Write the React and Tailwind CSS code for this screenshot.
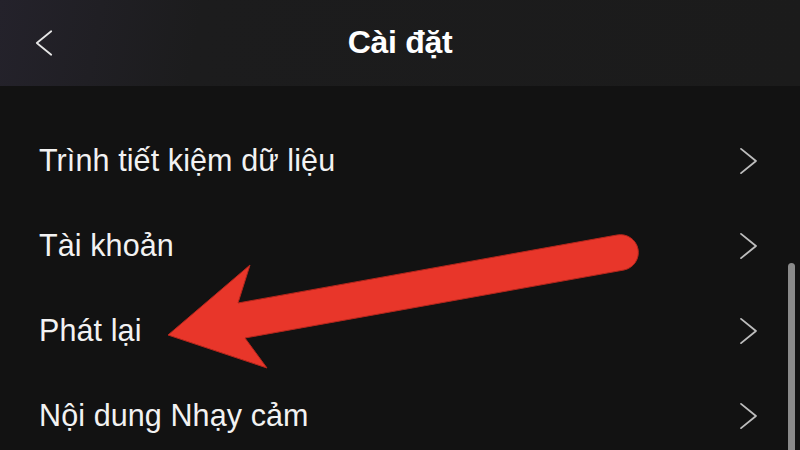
import React from 'react';

const rows = ['Trình tiết kiệm dữ liệu', 'Tài khoản', 'Phát lại', 'Nội dung Nhạy cảm'];

const Chevron = ({ dir = 'right', className = '' }) => (
  <svg viewBox="0 0 20 30" className={className} fill="none" stroke="currentColor" strokeWidth="2" strokeLinecap="round" strokeLinejoin="round">
    {dir === 'right' ? <path d="M2 2 L18 15 L2 28" /> : <path d="M18 2 L2 15 L18 28" />}
  </svg>
);

export default function App() {
  return (
    <div className="relative w-[800px] h-[450px] overflow-hidden bg-[#121212] text-white" style={{ fontFamily: '"Liberation Sans", Arial, sans-serif' }}>
      {/* header */}
      <div className="relative h-[86px] flex items-center justify-center bg-[linear-gradient(100deg,#24222b_0%,#1c1c1d_25%,#1b1b1b_100%)]">
        <Chevron dir="left" className="absolute left-[35px] top-[28px] w-[18px] h-[30px] text-[#e6e6e6]" />
        <h1 className="text-[32px] font-bold tracking-[-0.3px] -mt-[3px]">Cài đặt</h1>
      </div>

      {/* list */}
      <div className="flex flex-col pt-[32px] pl-[39px] pr-[42px]">
        {rows.map((label) => (
          <div key={label} className="h-[85px] flex items-center justify-between">
            <span className="text-[30.5px] text-[#f2f2f2] tracking-[0.1px]">{label}</span>
            <Chevron className="w-[19px] h-[28px] text-[#bdbdbd]" />
          </div>
        ))}
      </div>

      {/* scrollbar */}
      <div className="absolute right-[5px] top-[263px] bottom-0 w-[7px] rounded-t-full bg-[#8a8a8a]" />

      {/* red arrow overlay */}
      <svg className="absolute inset-0" width="800" height="450" viewBox="0 0 800 450">
        <path
          d="M168 335 L250 265 L238 303 L617 235 A17.5 17.5 0 0 1 624 270 L245 338 L267 368 Z"
          fill="#e8362a"
          stroke="#b3261c"
          strokeWidth="1"
          strokeLinejoin="round"
        />
      </svg>
    </div>
  );
}
